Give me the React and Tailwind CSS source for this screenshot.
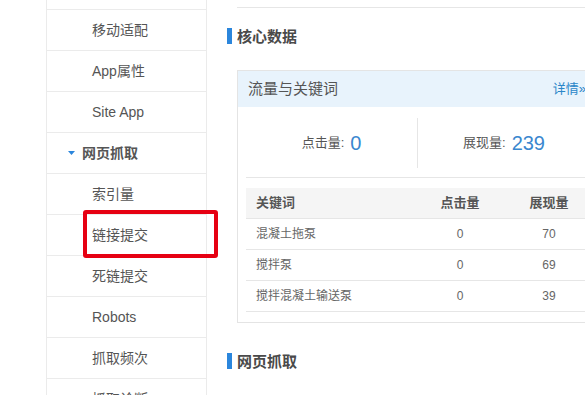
import React from "react";

const menu = ["移动适配", "App属性", "Site App"];
const crawl = ["索引量", "链接提交", "死链提交", "Robots", "抓取频次", "抓取诊断"];
const rows = [
  ["混凝土拖泵", "0", "70"],
  ["搅拌泵", "0", "69"],
  ["搅拌混凝土输送泵", "0", "39"],
];

function Heading({ title, className = "" }) {
  return (
    <div className={`flex items-center h-[16px] ${className}`}>
      <div className="w-[5px] h-[16px] bg-[#2b86dc]" />
      <span className="ml-[5px] text-[15px] font-bold text-[#4a4a4a] leading-none">{title}</span>
    </div>
  );
}

function NavRow({ children, className = "" }) {
  return (
    <div className={`h-[41px] border-b border-[#ebebeb] flex items-center pl-[45px] text-[14px] text-[#555] ${className}`}>
      {children}
    </div>
  );
}

export default function App() {
  return (
    <div
      className="relative w-[585px] h-[395px] overflow-hidden bg-white flex"
      style={{ fontFamily: '"Liberation Sans", "Noto Sans CJK SC", sans-serif' }}
    >
      {/* sidebar */}
      <div className="ml-[46px] w-[161px] shrink-0 border-l border-r border-[#ebebeb]">
        <div className="h-[10px] border-b border-[#ebebeb]" />
        {menu.map((m) => (
          <NavRow key={m}>{m}</NavRow>
        ))}
        <div className="h-[41px] border-b border-[#ebebeb] flex items-center pl-[21px]">
          <svg width="7" height="4" viewBox="0 0 7 4" className="mr-[7px]">
            <path d="M0 0h7L3.5 4z" fill="#2b86dc" />
          </svg>
          <span className="text-[14px] font-bold text-[#555]">网页抓取</span>
        </div>
        {crawl.map((m) => (
          <NavRow key={m}>{m}</NavRow>
        ))}
      </div>

      {/* main */}
      <div className="flex-1 pl-[20px]">
        <div className="ml-[10px] h-[8px] w-[400px] border-b border-[#e6e6e6]" />
        <Heading title="核心数据" className="mt-[20px]" />

        <div className="mt-[26px] ml-[10px] w-[370px] border border-[#e4e4e4]">
          <div className="h-[36px] bg-[#e8f3fc] flex items-center pl-[10px] pr-[20px]">
            <span className="text-[15px] text-[#555]">流量与关键词</span>
            <span className="ml-auto text-[13px] text-[#2a86c8]">详情»</span>
          </div>
          <div className="px-[8px] pb-[10px]">
            <div className="flex pt-[11px] pb-[9px] border-b border-[#e6e6e6]">
              <div className="w-[172px] h-[50px] border-r border-[#e6e6e6] flex items-center justify-center">
                <span className="text-[13px] text-[#555]">点击量:</span>
                <span className="ml-[6px] text-[20px] text-[#3a87cf]">0</span>
              </div>
              <div className="w-[172px] h-[50px] flex items-center justify-center">
                <span className="text-[13px] text-[#555]">展现量:</span>
                <span className="ml-[6px] text-[20px] text-[#3a87cf]">239</span>
              </div>
            </div>
            <div className="mt-[10px] text-[13px]">
              <div className="flex h-[31px] items-center bg-[#f5f5f5] border-b border-[#e6e6e6] font-bold text-[#555]">
                <div className="w-[174px] pl-[10px]">关键词</div>
                <div className="w-[80px] text-center">点击量</div>
                <div className="w-[98px] text-center">展现量</div>
              </div>
              {rows.map((r) => (
                <div key={r[0]} className="flex h-[31px] items-center border-b border-[#e6e6e6] text-[12px] text-[#666]">
                  <div className="w-[174px] pl-[10px]">{r[0]}</div>
                  <div className="w-[80px] text-center">{r[1]}</div>
                  <div className="w-[98px] text-center">{r[2]}</div>
                </div>
              ))}
            </div>
          </div>
        </div>

        <Heading title="网页抓取" className="mt-[30px]" />
      </div>

      {/* red annotation box */}
      <div className="absolute left-[83px] top-[210px] w-[135px] h-[48px] border-4 border-[#e60012] rounded-[3px]" />
    </div>
  );
}
